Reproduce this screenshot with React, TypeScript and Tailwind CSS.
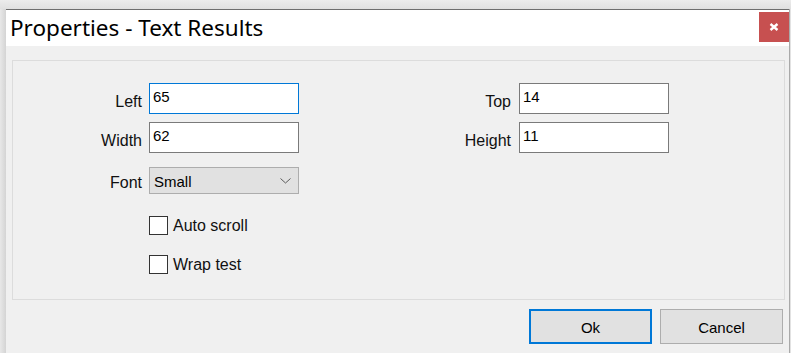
const TextBox = ({ value, focused }: { value: string; focused?: boolean }) => (
  <div
    className={`w-[150px] h-[31px] bg-white border pl-[3px] pt-[4px] text-[15px] leading-[17px] text-black ${
      focused ? 'border-[#0078d7]' : 'border-[#7a7a7a]'
    }`}
  >
    {value}
  </div>
);

const Field = ({ label, value, labelWidth, gap, focused }: { label: string; value: string; labelWidth: string; gap: string; focused?: boolean }) => (
  <div className={`flex h-[31px] ${gap}`}>
    <div className={`${labelWidth} text-right text-[16px] leading-[18px] pt-[10px] text-[#111111]`}>{label}</div>
    <TextBox value={value} focused={focused} />
  </div>
);

const Check = ({ label }: { label: string }) => (
  <div className="flex h-[19px] items-start gap-[5px]">
    <div className="w-[19px] h-[19px] bg-white border border-[#333333] shrink-0" />
    <span className="text-[16px] leading-[18px] mt-[1px] text-[#111111]">{label}</span>
  </div>
);

const App = () => {
  return (
    <div className="w-[791px] h-[353px] bg-[#e6e6e6] flex flex-col overflow-hidden font-['Liberation_Sans',Arial,sans-serif]">
      <div className="h-[9px] bg-gradient-to-b from-[#ececec] to-[#e0e0e0]" />
      <div className="flex flex-1">
        <div className="w-[6px] bg-gradient-to-r from-[#e8e8e8] to-[#d4d4d4]" />

        {/* dialog window */}
        <div className="w-[783px] flex flex-col bg-[#f0f0f0] border-t border-[#6e6e6e]">
          <div className="h-[36px] bg-white flex items-start justify-between">
            <div className="pl-[4px] pt-[5px] text-[22.5px] leading-[26px] text-black font-['Noto_Sans',sans-serif]">
              Properties - Text Results
            </div>
            <div className="w-[30px] h-[30px] mt-[2px] bg-[#c75050] flex items-center justify-center">
              <svg width="10" height="8" viewBox="0 0 10 8">
                <path d="M1.5 1 L8.5 7 M8.5 1 L1.5 7" stroke="white" strokeWidth="2.4" />
              </svg>
            </div>
          </div>

          {/* group box */}
          <div className="ml-[6px] mt-[14px] w-[773px] h-[240px] border border-[#dcdcdc] pt-[22px] flex">
            <div className="flex flex-col">
              <div className="flex flex-col gap-[8px]">
                <Field label="Left" value="65" labelWidth="w-[129px]" gap="gap-[7px]" focused />
                <Field label="Width" value="62" labelWidth="w-[129px]" gap="gap-[7px]" />
              </div>
              <div className="flex h-[27px] gap-[7px] mt-[14px]">
                <div className="w-[129px] text-right text-[16px] leading-[18px] pt-[7px] text-[#111111]">Font</div>
                <div className="w-[150px] h-[27px] bg-[#e1e1e1] border border-[#adadad] flex items-start justify-between pl-[4px] pr-[7px] pt-[5px] text-[15px] leading-[17px] text-black">
                  <span>Small</span>
                  <svg width="11" height="6" viewBox="0 0 11 6" className="mt-[5px]">
                    <path d="M0.5 0.5 L5.5 5 L10.5 0.5" fill="none" stroke="#5a5a5a" strokeWidth="1" />
                  </svg>
                </div>
              </div>
              <div className="flex flex-col gap-[20px] mt-[22px] pl-[136px]">
                <Check label="Auto scroll" />
                <Check label="Wrap test" />
              </div>
            </div>

            <div className="flex flex-col gap-[8px] ml-[132px]">
              <Field label="Top" value="14" labelWidth="w-[80px]" gap="gap-[8px]" />
              <Field label="Height" value="11" labelWidth="w-[80px]" gap="gap-[8px]" />
            </div>
          </div>

          {/* buttons */}
          <div className="flex justify-end gap-[8px] mt-[9px] pr-[6px]">
            <button className="w-[123px] h-[35px] bg-[#e1e1e1] border-2 border-[#0078d7] text-[15px] leading-[17px] pt-[1px] text-black">
              Ok
            </button>
            <button className="w-[123px] h-[35px] bg-[#e1e1e1] border border-[#adadad] text-[15px] leading-[17px] pt-[1px] text-black">
              Cancel
            </button>
          </div>
        </div>

        <div className="w-[2px] border-l border-[#a9a9a9] bg-[#e2e2e2]" />
      </div>
    </div>
  );
};

export default App;
